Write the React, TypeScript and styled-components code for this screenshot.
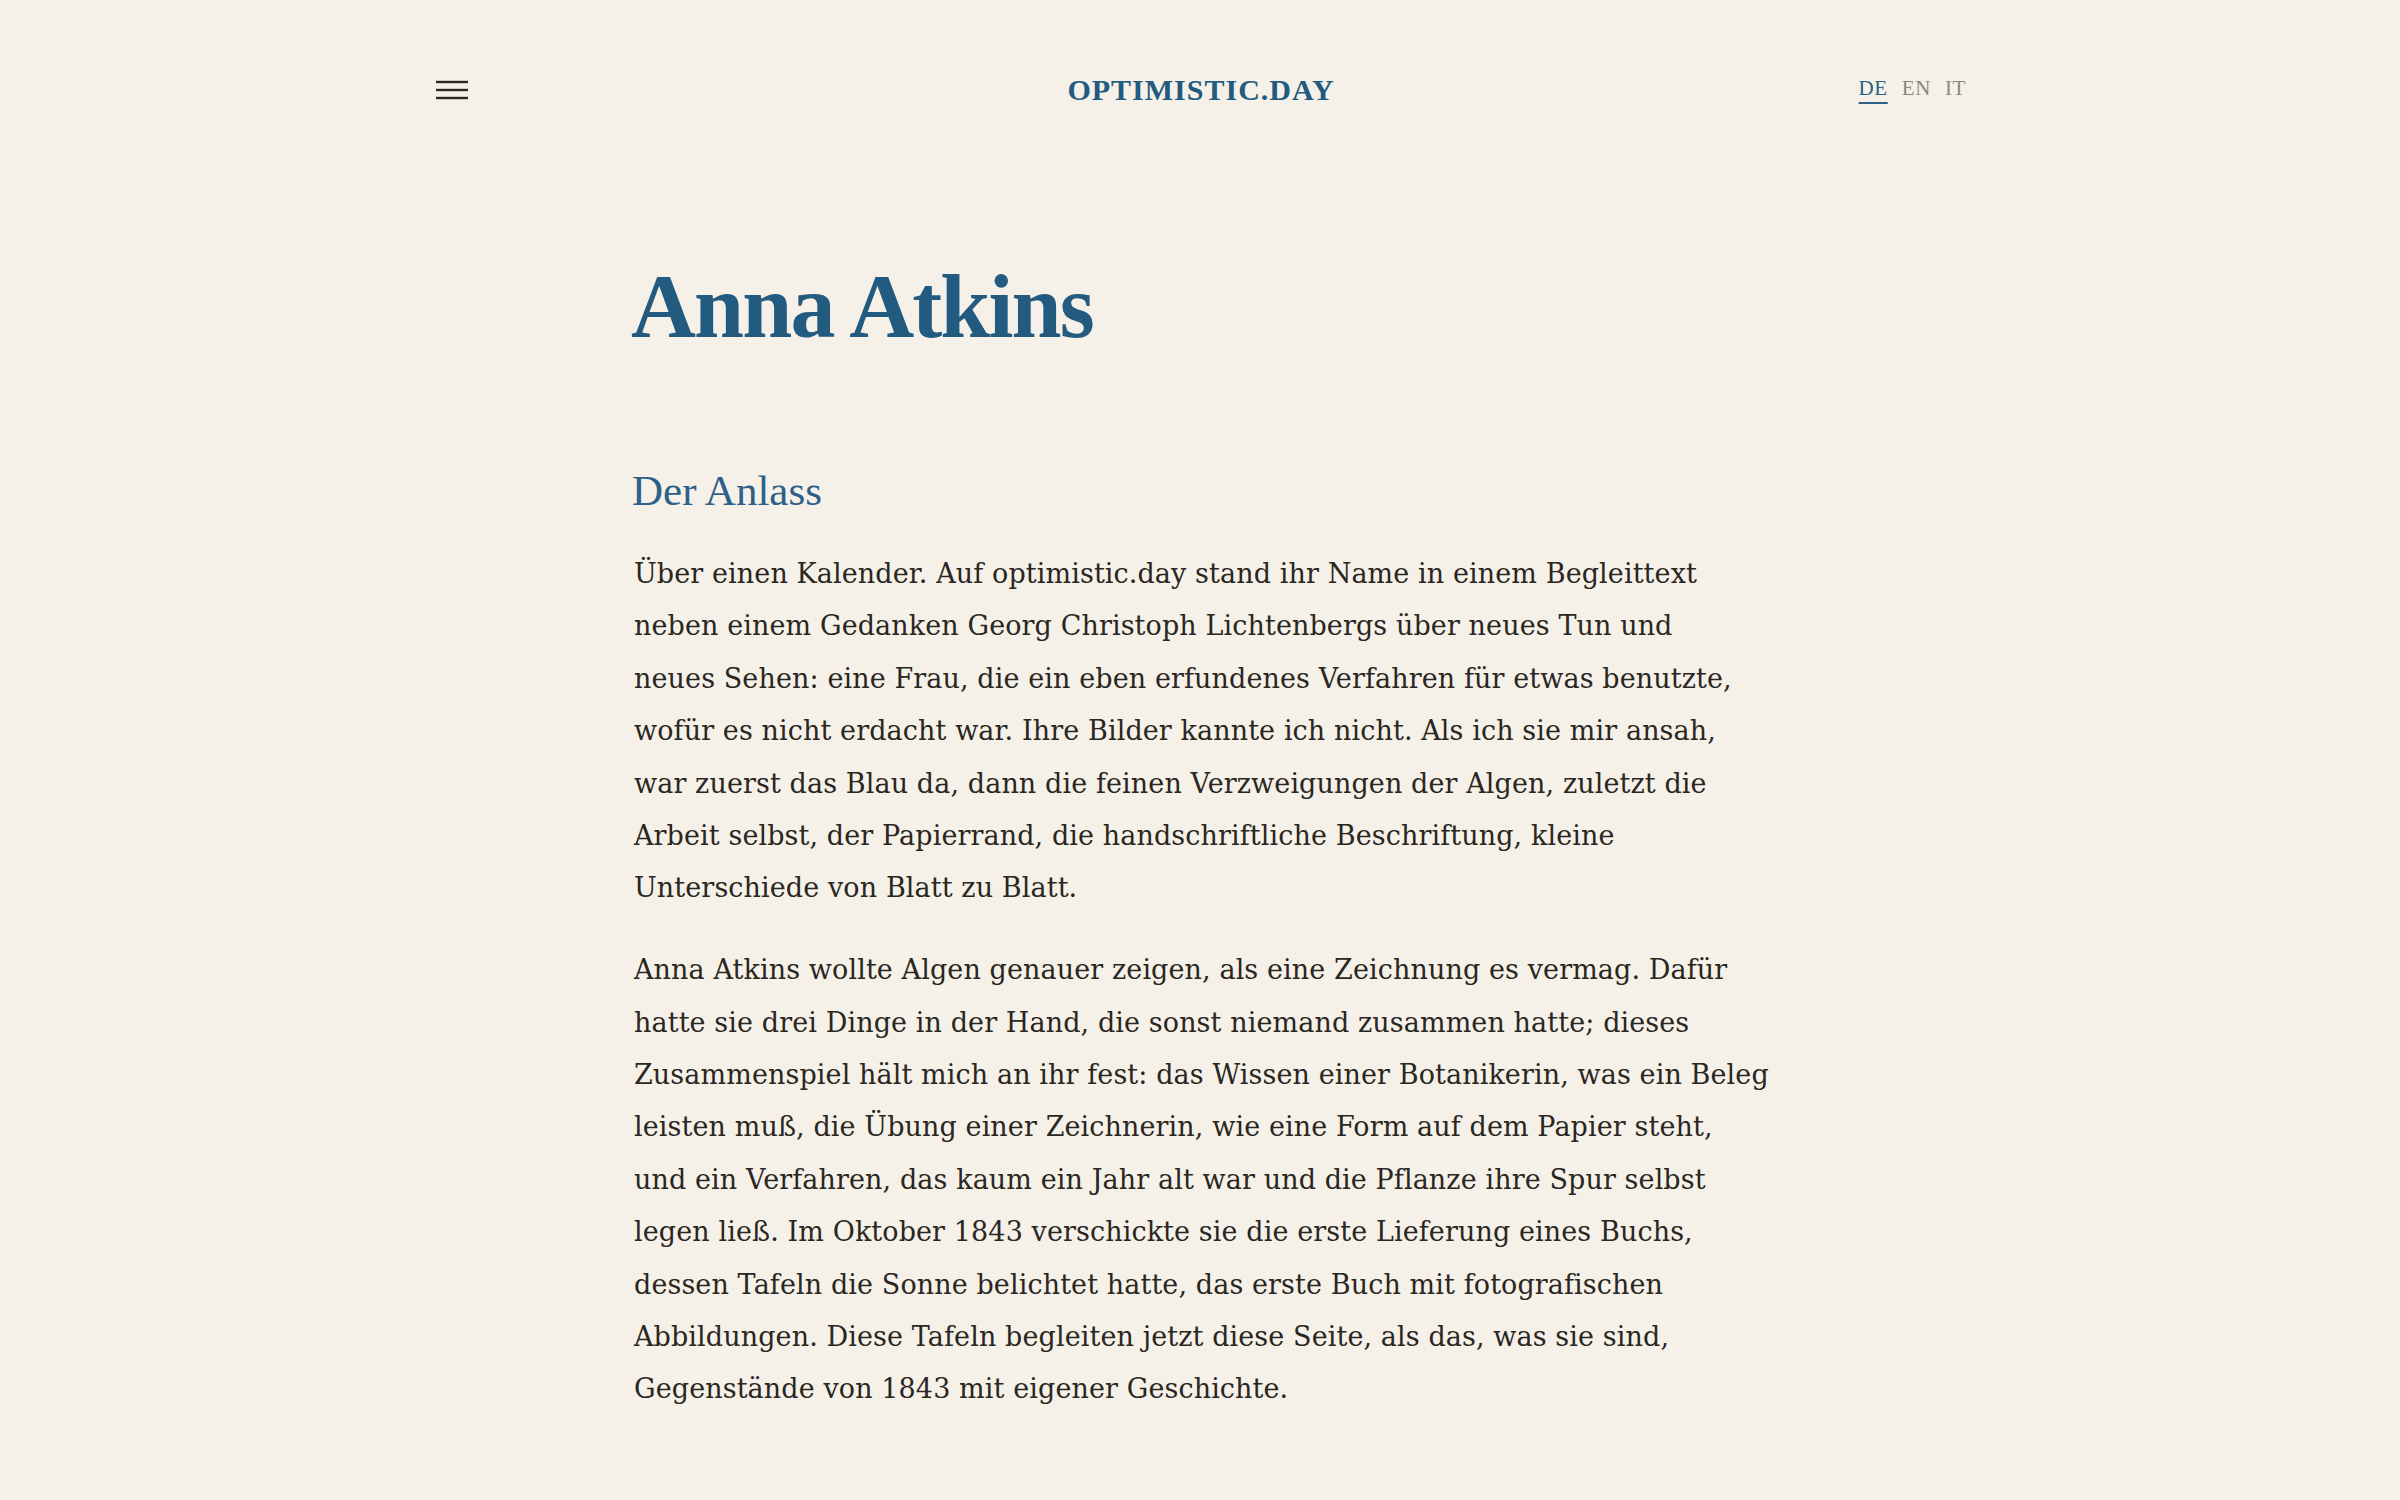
import React from "react";
import styled, { createGlobalStyle } from "styled-components";

const GlobalStyle = createGlobalStyle`
  html, body {
    margin: 0;
    padding: 0;
    background: #f5f1e8;
  }
  body {
    font-family: "DejaVu Serif", "Liberation Serif", serif;
    color: #2a2622;
    -webkit-font-smoothing: antialiased;
  }
`;

const languages = ["DE", "EN", "IT"];

// Zeilen so umbrochen wie im Original
const paragraphs: string[][] = [
  [
    "Über einen Kalender. Auf optimistic.day stand ihr Name in einem Begleittext",
    "neben einem Gedanken Georg Christoph Lichtenbergs über neues Tun und",
    "neues Sehen: eine Frau, die ein eben erfundenes Verfahren für etwas benutzte,",
    "wofür es nicht erdacht war. Ihre Bilder kannte ich nicht. Als ich sie mir ansah,",
    "war zuerst das Blau da, dann die feinen Verzweigungen der Algen, zuletzt die",
    "Arbeit selbst, der Papierrand, die handschriftliche Beschriftung, kleine",
    "Unterschiede von Blatt zu Blatt.",
  ],
  [
    "Anna Atkins wollte Algen genauer zeigen, als eine Zeichnung es vermag. Dafür",
    "hatte sie drei Dinge in der Hand, die sonst niemand zusammen hatte; dieses",
    "Zusammenspiel hält mich an ihr fest: das Wissen einer Botanikerin, was ein Beleg",
    "leisten muß, die Übung einer Zeichnerin, wie eine Form auf dem Papier steht,",
    "und ein Verfahren, das kaum ein Jahr alt war und die Pflanze ihre Spur selbst",
    "legen ließ. Im Oktober 1843 verschickte sie die erste Lieferung eines Buchs,",
    "dessen Tafeln die Sonne belichtet hatte, das erste Buch mit fotografischen",
    "Abbildungen. Diese Tafeln begleiten jetzt diese Seite, als das, was sie sind,",
    "Gegenstände von 1843 mit eigener Geschichte.",
  ],
];

const App: React.FC = () => {
  return (
    <>
      <GlobalStyle />
      <Page>
        <Header>
          <MenuButton type="button" aria-label="Menü">
            <svg width="32" height="20" viewBox="0 0 32 20">
              <line x1="0" y1="2" x2="32" y2="2" stroke="#2d2a26" strokeWidth="2.4" />
              <line x1="0" y1="10" x2="32" y2="10" stroke="#2d2a26" strokeWidth="2.4" />
              <line x1="0" y1="18" x2="32" y2="18" stroke="#2d2a26" strokeWidth="2.4" />
            </svg>
          </MenuButton>
          <Logo>OPTIMISTIC.DAY</Logo>
          <LangList>
            {languages.map((lang) => (
              <LangLink key={lang} $active={lang === "DE"}>
                {lang}
              </LangLink>
            ))}
          </LangList>
        </Header>

        <Article>
          <Title>Anna Atkins</Title>
          <SectionTitle>Der Anlass</SectionTitle>
          {paragraphs.map((lines, i) => (
            <Paragraph key={i}>
              {lines.map((line, j) => (
                <Line key={j}>{line}</Line>
              ))}
            </Paragraph>
          ))}
        </Article>
      </Page>
    </>
  );
};

const Page = styled.div`
  min-height: 1500px;
  background: #f5f1e8;
`;

const Header = styled.header`
  max-width: 1530px;
  height: 180px;
  margin: 0 auto;
  padding-left: 2px;
  display: grid;
  grid-template-columns: 1fr auto 1fr;
  align-items: center;
`;

const MenuButton = styled.button`
  justify-self: start;
  display: flex;
  padding: 0;
  border: none;
  background: none;
  cursor: pointer;
`;

const Logo = styled.a`
  font-family: "Liberation Serif", serif;
  font-weight: 700;
  font-size: 30px;
  line-height: 1;
  letter-spacing: 1px;
  color: #235a7f;
  text-decoration: none;
`;

const LangList = styled.nav`
  justify-self: end;
  display: flex;
  gap: 14px;
  margin-top: -4px;
`;

const LangLink = styled.a<{ $active?: boolean }>`
  font-family: "Liberation Serif", serif;
  font-size: 21px;
  line-height: 1;
  letter-spacing: 0.6px;
  color: ${(p) => (p.$active ? "#2e6186" : "#8c877e")};
  text-decoration: ${(p) => (p.$active ? "underline" : "none")};
  text-decoration-thickness: 2px;
  text-underline-offset: 7px;
  cursor: pointer;
`;

const Article = styled.main`
  max-width: 1132px;
  margin: 0 auto;
  padding-top: 73px;
`;

const Title = styled.h1`
  margin: 0 0 0 -3px;
  font-family: "Liberation Serif", serif;
  font-weight: 700;
  font-size: 90px;
  line-height: 1.2;
  letter-spacing: -1.9px;
  color: #235a7f;
`;

const SectionTitle = styled.h2`
  margin: 102px 0 0 -2px;
  font-family: "Liberation Serif", serif;
  font-weight: 400;
  font-size: 43px;
  line-height: 1.3;
  color: #2d6088;
`;

const Paragraph = styled.p`
  margin: 29px 0 0;
  font-family: "DejaVu Serif", serif;
  font-size: 27px;
  line-height: 52.4px;
  letter-spacing: 0.1px;
  color: #2a2622;

  & + & {
    margin-top: 29.5px;
  }
`;

const Line = styled.span`
  display: block;
  white-space: nowrap;
`;

export default App;
